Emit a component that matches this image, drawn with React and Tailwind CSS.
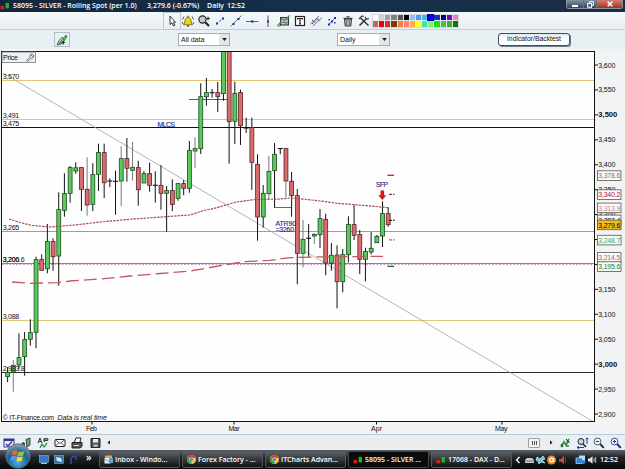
import React from 'react'

// [high, body top, body bottom, low, kind]
const candles = [
  [367, 372.3, 376.7, 382, 'g'], [360, 365, 372, 391.7, 'g'], [333.3, 357.3, 365, 369, 'g'],
  [332, 339.3, 356.7, 375.7, 'g'], [319.3, 332.3, 339.3, 345.7, 'g'], [256.7, 259.3, 332.3, 348.3, 'g'],
  [254.3, 259.3, 270.3, 270.3, 'r'], [224, 241.3, 268.7, 273.3, 'g'], [238.3, 241.3, 256.7, 270.7, 'r'],
  [192.3, 209.3, 256, 285.7, 'g'], [173.3, 193.3, 210.3, 216.7, 'g'], [166, 167.3, 193.3, 202.7, 'g'],
  [162.3, 167.5, 171, 173.7, 'g'], [167.3, 167.3, 189.3, 211, 'r'], [157.3, 189, 205, 215.7, 'r'],
  [163.3, 174.3, 204.3, 211, 'g'], [143.7, 152.3, 174.3, 191, 'g'], [143.7, 152.3, 182.7, 198, 'r'],
  [178.3, 181, 181, 187, 'd'], [170.7, 181.3, 181.3, 214.7, 'd'], [146.3, 158.3, 181, 206, 'g'],
  [138, 158.3, 168.3, 181.7, 'r'], [142, 167, 170.3, 180.7, 'g'], [160.7, 167.3, 189.7, 205.7, 'r'],
  [171, 173.3, 183, 183, 'g'], [162.7, 173.3, 185.3, 191.7, 'r'], [171.3, 185.3, 185.3, 202.7, 'd'],
  [165, 185, 193.3, 209.7, 'r'], [186, 190.3, 193.3, 231.7, 'g'], [179.3, 190.3, 204.3, 211, 'r'],
  [183.3, 183.3, 198.3, 200.7, 'g'], [180, 183.3, 188.3, 195.3, 'r'], [141, 150.3, 188.3, 192.7, 'g'],
  [137.3, 148.3, 151, 168.3, 'g'], [83.3, 96.3, 148.7, 154, 'g'], [78, 92.3, 96.7, 105.7, 'g'],
  [89, 92.7, 92.7, 97.7, 'd'], [82, 92.3, 96.7, 112, 'r'], [51, 50, 93.7, 100.7, 'g'],
  [51, 50, 121.7, 163.7, 'r'], [81.7, 93, 121.3, 144, 'g'], [89.7, 92.3, 125.7, 145, 'r'],
  [117.7, 128, 128, 133, 'd'], [117.7, 127.3, 162.3, 190, 'r'], [154.3, 164, 217, 240.7, 'r'],
  [185, 193, 217, 227.7, 'g'], [155.7, 171, 193.7, 199.3, 'g'], [143, 154, 170.7, 207.7, 'g'],
  [148.3, 148.5, 148.5, 154.3, 'd'], [148.3, 148.3, 181, 197.3, 'r'], [172, 181, 195.7, 216.7, 'r'],
  [189, 195.3, 253.3, 284.3, 'r'], [220, 239, 253.3, 267.3, 'g'], [224, 238.3, 238.3, 257, 'd'],
  [233, 234, 236, 244, 'g'], [209, 218.3, 234.7, 248, 'g'], [213.7, 219, 263, 275.3, 'r'],
  [243, 255, 263, 270.7, 'g'], [245.3, 254.7, 281.7, 308.3, 'r'], [249, 254.3, 281.7, 292.3, 'g'],
  [216.3, 224.3, 254.7, 262.3, 'g'], [205, 224.3, 235.3, 240, 'r'], [230, 234.3, 259.3, 274, 'r'],
  [247.7, 251.3, 259.3, 281.3, 'g'], [232, 248, 252, 254.3, 'g'], [235, 236, 242.7, 243, 'g'],
  [201.3, 213.3, 236, 247, 'g'], [207.3, 213.3, 224.7, 226.7, 'r'],
]

const greyWicks = [1, 14, 20, 22, 33, 46, 49, 52, 54]

const levels = [
  { y: 80.5, label: '3,570', color: '#e8c470' },
  { y: 119.5, label: '3,491', color: '#e8c470' },
  { y: 127.5, label: '3,475', color: '#111' },
  { y: 231.5, label: '3,265', color: '#869fd0' },
  { y: 263.5, label: '3,206.6', color: '#8c78b4' },
  { y: 320.5, label: '3,088', color: '#e2c870' },
  { y: 372.5, label: '2,983.8', color: '#2a2a2a' },
]

// 3,250 and 3,200 have no label, the price tags cover them
const ticks = ['3,600', '3,550', '3,500', '3,450', '3,400', '3,350', '3,300', '', '', '3,150', '3,100', '3,050', '3,000', '2,950', '2,900']

const tags = [
  { y: 175.5, text: '3,378.6', color: '#c0505c' },
  { y: 194.5, text: '3,340.2', color: '#b8202c' },
  { y: 207.8, text: '3,313.9', color: '#c8808a' },
  { y: 219.8, text: '3,287.4', color: '#111' },
  { y: 224.8, text: '3,279.6', color: '#000', fill: '#f5bd1c' },
  { y: 240, text: '3,248.7', color: '#4aa04a' },
  { y: 257.3, text: '3,214.5', color: '#b0606a' },
  { y: 266.5, text: '3,195.6', color: '#1c7a2c' },
]

const Candle = ({ data, index }) => {
  const [high, top, bottom, low, kind] = data
  const x = 7.6 + index * 5.68
  const wick = greyWicks.includes(index) ? '#777' : '#111'
  return (
    <g>
      <line x1={x} x2={x} y1={high} y2={low} stroke={wick} strokeWidth="1" />
      {kind === 'd' ? (
        <line x1={x - 2.5} x2={x + 2.5} y1={top} y2={top} stroke="#111" strokeWidth="1.1" />
      ) : (
        <rect x={x - 1.9} y={top + 0.3} width="3.9" height={Math.max(bottom - top - 0.3, 1.5)}
          fill={kind === 'g' ? '#58cc5a' : '#d96c6e'} stroke={kind === 'g' ? '#1c4a1e' : '#5c2022'} strokeWidth="0.8" />
      )}
    </g>
  )
}

const Chart = () => (
  <svg width="625" height="385" viewBox="0 49 625 385" className="block bg-[#f1f3f5]" fontFamily='"Liberation Sans", sans-serif' fontSize="7">
    <defs>
      <clipPath id="plot"><rect x="2" y="52" width="592" height="369" /></clipPath>
    </defs>
    <rect x="1.5" y="51.5" width="593" height="370" fill="#fefefe" stroke="#111" />
    <g clipPath="url(#plot)">
      {levels.map((l) => <line key={l.y} x1="2" x2="594" y1={l.y} y2={l.y} stroke={l.color} />)}
      <line x1="2" x2="594" y1="264.3" y2="264.3" stroke="#c088b8" strokeDasharray="2 1.5" />
      <line x1="3" y1="73" x2="593" y2="421.5" stroke="#a2a2a2" strokeWidth="0.8" />
      <line x1="189" x2="228" y1="99.5" y2="99.5" stroke="#3a7a48" />
      <path d="M274.5 207.5H291.5" stroke="#5a62a0" />
      {candles.map((c, i) => <Candle key={i} data={c} index={i} />)}
      <polyline points="9,219 20,222.5 32,225.5 50,227 75,225 100,222 133,219 157,217.3 190,215 203,210.7 217,207.7 235,202.3 253,199.7 280,199 290,198 300,198.7 323,201.3 337,203.3 367,205.7 388,207.7"
        fill="none" stroke="#a84a50" strokeWidth="1.2" strokeDasharray="2.4 1" />
      <polyline points="12,282 30,283.3 58,282.6 70,281 100,279 130,276 160,273.5 190,271 210,267.5 230,264 243,261.7 270,260.3 290,257.7 313,257 383,256.3"
        fill="none" stroke="#c0585c" strokeWidth="1.3" strokeDasharray="13 5" />
      <g strokeWidth="1.3">
        <line x1="387.5" x2="394" y1="175.3" y2="175.3" stroke="#c82030" />
        <line x1="389" x2="394.5" y1="194.3" y2="194.3" stroke="#a03038" strokeDasharray="3 1" />
        <line x1="389" x2="394.5" y1="220.3" y2="220.3" stroke="#222" strokeDasharray="3 1" />
        <line x1="389" x2="394.5" y1="239.8" y2="239.8" stroke="#50a058" strokeDasharray="3 1" />
        <line x1="387.5" x2="394" y1="266.3" y2="266.3" stroke="#106820" />
      </g>
      <path d="M380.5 190.5H384.1V195.2H386.3L382.3 200L378.3 195.2H380.5Z" fill="#dc1414" />
    </g>

    {levels.map((l) => <text key={l.label} x="2.7" y={l.y - 1.3} fill="#111" textLength={l.label.length > 5 ? 22 : 16.5}>{l.label}</text>)}
    <text x="2.7" y="262.2" fill="#111" textLength="16.5">3,200</text>
    <g fill="#2c2c8c" fontSize="6.8" stroke="#2c2c8c" strokeWidth="0.15">
      <text x="157.5" y="127" textLength="17.5">MLCS</text>
      <text x="376" y="186.7" textLength="12">SFP</text>
      <text x="275.5" y="225.5" textLength="20.5">ATR90</text>
      <text x="275.5" y="232.3" textLength="18.5">=3260</text>
    </g>
    <text x="2.7" y="419.5" fill="#111" textLength="51.5">© IT-Finance.com</text>
    <text x="57.5" y="419.5" fill="#111" fontStyle="italic" textLength="49.5">Data is real time</text>

    <rect x="2" y="52" width="33.5" height="10.5" fill="#edf1f4" stroke="#777" strokeWidth="0.8" />
    <text x="3" y="59.7" fill="#111" textLength="15">Price</text>
    <path d="M26.8 60.5L30 57.3C29.3 55.3 30.8 53.7 32.5 54L31.2 55.5L32.3 56.6L33.8 55.2C34.2 57 32.7 58.4 31.2 58.2L28 61.4Z" fill="#fff" stroke="#333" strokeWidth="0.7" />

    {ticks.map((t, i) => {
      const y = 65 + i * 24.93
      const major = t === '3,500' || t === '3,000'
      return (
        <g key={i}>
          <line x1="595" x2="598" y1={y} y2={y} stroke="#111" />
          {t && <text x="598.3" y={y + 2.5} fill="#111" fontSize={major ? 7.6 : 7} fontWeight={major ? 700 : 400} textLength={major ? 19 : 17}>{t}</text>}
        </g>
      )
    })}
    {tags.map((t) => (
      <g key={t.text}>
        <rect x="597.5" y={t.y - 4.7} width="23.5" height="9.6" fill={t.fill || '#fafbfb'} stroke="#555" strokeWidth="0.8" />
        <text x="598.3" y={t.y + 2.7} fill={t.color} textLength="22">{t.text}</text>
      </g>
    ))}
    {[[92, 'Feb', 86], [234, 'Mar', 228.5], [376.5, 'Apr', 371], [502, 'May', 495]].map(([x, label, tx]) => (
      <g key={label}>
        <line x1={x} x2={x} y1="422" y2="424.5" stroke="#111" />
        <text x={tx} y="431.3" fill="#111" textLength={label === 'May' ? 12.5 : 11}>{label}</text>
      </g>
    ))}
  </svg>
)

const Icon = ({ children, className = '' }) => (
  <svg viewBox="0 0 16 16" width="16" height="16" fill="none" stroke="#222" className={`shrink-0 ${className}`}>{children}</svg>
)

const drawTools = [
  <Icon key="cursor"><path d="M6 3L6 11.5L8 9.8L9.5 13L10.8 12.3L9.4 9.3H11.5Z" fill="#fff" strokeWidth="0.9" /></Icon>,
  <Icon key="bell">
    <path d="M3.5 11.8C5.5 10 4 4.8 8 4C12 4.8 10.5 10 12.5 11.8Z" fill="#f0d418" stroke="#6a5a10" strokeWidth="0.8" />
    <path d="M7 13H9M8 2.8V4" stroke="#6a5a10" strokeWidth="1.3" /><path d="M4 3.5L2.5 6.5M2 9L3 11M12 3.5L13.5 6.5M14 9L13 11" stroke="#444" strokeWidth="0.9" />
  </Icon>,
  <Icon key="search"><circle cx="6.5" cy="6.5" r="3.6" fill="#c4cad0" strokeWidth="1.1" /><path d="M9.3 9.3L13 13" strokeWidth="2.2" /><path d="M10 5.5H14M12 3.5V7.5" stroke="#333" /></Icon>,
  <Icon key="segment"><path d="M5 10.5L11 5.5" stroke="#888" strokeDasharray="1 1" /><path d="M4 9.5H6V11.5H4ZM7.5 7.5H8.5V8.5H7.5ZM10 4.5H12V6.5H10Z" fill="#2228a0" stroke="none" /></Icon>,
  <Icon key="line"><path d="M2.5 13.5L13.5 2.5" stroke="#555" strokeWidth="0.8" /><path d="M4.5 10H6.5V12H4.5ZM9.5 5H11.5V7H9.5Z" fill="#2228a0" stroke="none" /></Icon>,
  <Icon key="hline"><path d="M2 8.5H14.5" stroke="#555" strokeWidth="0.9" /><path d="M7 7.5H9.5V9.5H7Z" fill="#2228a0" stroke="none" /></Icon>,
  <Icon key="vline"><path d="M8 2.5V14" stroke="#444" strokeWidth="0.9" /><path d="M7 7.5H9V9.5H7Z" fill="#2228a0" stroke="none" /></Icon>,
  <Icon key="fib"><rect x="4.5" y="4.5" width="8" height="7.5" fill="#b8bcc0" strokeWidth="0.9" /><path d="M4 6.5H12M4 9.5H12M5 5L12 12" stroke="#555" strokeWidth="0.6" /><path d="M1.5 13L5 9M9 7L13.5 2.5" stroke="#20a030" strokeWidth="1.2" /><path d="M3 13.5L5 12" stroke="#d02020" /></Icon>,
  <Icon key="text"><rect x="3.5" y="3.5" width="9" height="9" fill="#fff" strokeWidth="1.2" /><path d="M5.5 6.5V5.5H10.5V6.5M8 5.5V11M7 11H9" strokeWidth="1.2" /></Icon>,
  <Icon key="channel"><path d="M2.5 11L11 3M5 13L14 4.5" stroke="#555" strokeWidth="0.8" /><path d="M4 7L7 9.5M9 5.5L12 8.5M4 11L11 5" stroke="#3038a8" strokeWidth="1" strokeDasharray="2 1" /></Icon>,
  <Icon key="points"><path d="M5 11.5L11 5" stroke="#555" strokeWidth="0.8" /><path d="M4 10.5H6V12.5H4ZM10 4H12V6H10ZM7 7.5H9V9.5H7ZM4.5 6H6V7.5H4.5ZM10 9H11.5V10.5H10Z" fill="#2228a0" stroke="none" /></Icon>,
  <Icon key="trash"><path d="M4.5 6H11.5L10.8 13H5.2Z" fill="#bbb" strokeWidth="0.9" /><path d="M3.5 5.3H12.5M6.5 3.8H9.5" /><path d="M6.7 7V12M9.3 7V12" stroke="#555" strokeWidth="0.8" /></Icon>,
  <Icon key="tools"><path d="M3.5 12.5L10 6M4 4.5L12.5 12.5" stroke="#333" strokeWidth="1.5" /><path d="M3 6L6 3L8 3.5M9 4L11 6.2L13 5.5" stroke="#444" strokeWidth="1.2" /></Icon>,
]

const palette = [
  'bg-white', 'bg-[#cfcfcf]', 'bg-[#a0a0a0]', 'bg-[#808080]', 'bg-[#555]', 'bg-black', 'bg-[#9bbcf0]', 'bg-[#5a96e6]', 'bg-[#40b8e8]', 'bg-[#0000e0]', 'bg-[#2828b8]', 'bg-[#000090]', 'bg-[#7208b0]', 'bg-[#f07cc0]',
  'bg-[#cc6068]', 'bg-[#f00000]', 'bg-[#dc2c2c]', 'bg-[#7c3c08]', 'bg-[#f08048]', 'bg-[#ff8070]', 'bg-[#ffb040]', 'bg-[#ffff20]', 'bg-[#40e0c0]', 'bg-[#80f080]', 'bg-[#08ec08]', 'bg-[#48c048]', 'bg-[#38ac38]', 'bg-[#087808]',
]

const Select = ({ label, className }) => (
  <div className={`flex h-[13px] items-center justify-between border border-[#a3adb4] bg-white pl-[2px] ${className}`}>
    <span className="text-[7px] leading-none">{label}</span>
    <span className="flex h-full w-[10px] items-center justify-center bg-[#e4e7ea]">
      <svg width="5" height="3" viewBox="0 0 5 3"><path d="M0 0H5L2.5 3Z" fill="#222" /></svg>
    </span>
  </div>
)

const CandleLogo = () => (
  <svg width="10" height="8" viewBox="0 0 10 8" className="shrink-0">
    <path d="M2.2 3V8M7.2 0V7" stroke="#333" strokeWidth="0.7" />
    <rect x="0.5" y="4" width="3.6" height="3.3" fill="#e01818" /><rect x="5.6" y="1" width="3.4" height="5.3" fill="#18b828" />
  </svg>
)

const ChromeLogo = () => (
  <svg width="9" height="9" viewBox="0 0 18 18" className="shrink-0">
    <circle cx="9" cy="9" r="9" fill="#f4c828" />
    <path d="M9 9L1.2 4.5A9 9 0 0 1 16.8 4.5Z" fill="#e03c2c" />
    <path d="M9 9L1.2 4.5A9 9 0 0 0 9 18Z" fill="#34a048" />
    <circle cx="9" cy="9" r="4.2" fill="#fff" /><circle cx="9" cy="9" r="3.2" fill="#3c78d8" />
  </svg>
)

const MailLogo = () => (
  <svg width="9" height="9" viewBox="0 0 9 9" className="shrink-0">
    <rect x="1" y="0.5" width="7" height="4" fill="#f0a040" /><rect x="0.5" y="3" width="6" height="5.5" fill="#e8eef4" /><path d="M5 3H9V8H5Z" fill="#58a8e0" /><path d="M1 4L4 6.5L7 4" stroke="#5080a0" fill="none" strokeWidth="0.7" />
  </svg>
)

const TaskButton = ({ icon, label, active }) => (
  <div className={`flex h-[17px] w-[81px] shrink-0 items-center gap-[2px] rounded-[2px] border pl-[4px] text-white ${active ? 'border-[#444] bg-[#0b0b0c]' : 'border-[#53565a] bg-linear-to-b from-[#5d6165] via-[#34373a] to-[#141516]'}`}>
    {icon}
    <span className="text-[7px] leading-none whitespace-nowrap">{label}</span>
  </div>
)

const TitleBar = () => (
  <div className="flex h-3 items-start bg-linear-to-r from-[#14263c] via-[#14304c] to-[#1a2d44] text-white">
    <div className="mt-[2px] flex w-[13px]"><CandleLogo /></div>
    <div className="flex h-[11px] items-center font-['Open_Sans',sans-serif] text-[7px] leading-none font-semibold whitespace-nowrap">
      <span className="w-[134px]">58095 - SILVER - Rolling Spot (per 1.0)</span>
      <span className="w-[60px]">3,279.6 (-0.67%)</span>
      <span className="w-[20px]">Daily</span>
      <span>12:52</span>
    </div>
    <div className="mr-[2px] ml-auto flex h-[9px] overflow-hidden rounded-b-[3px] border border-t-0 border-[#8994a0]">
      <div className="flex w-[16px] items-center justify-center bg-linear-to-b from-[#8492a2] to-[#34465a]"><div className="mt-[3px] h-[2px] w-[6px] bg-white" /></div>
      <div className="flex w-[14px] items-center justify-center border-x border-[#66717e] bg-linear-to-b from-[#8492a2] to-[#34465a]">
        <svg width="7" height="7" viewBox="0 0 7 7" fill="none" stroke="#fff"><path d="M2.5 2V0.7H6.3V4.5H5" /><rect x="0.7" y="2.5" width="3.8" height="3.8" /></svg>
      </div>
      <div className="flex w-[25px] items-center justify-center bg-linear-to-b from-[#d08072] to-[#a82c18]">
        <svg width="6" height="6" viewBox="0 0 6 6" stroke="#fff" strokeWidth="1.6"><path d="M0.7 0.7L5.3 5.3M5.3 0.7L0.7 5.3" /></svg>
      </div>
    </div>
  </div>
)

const ToolBars = () => (
  <>
    <div className="flex h-[18px] items-center border-b border-[#c3ced6] bg-linear-to-b from-[#f3f8fa] to-[#e8eff4] pl-[164px]">
      {drawTools.map((tool, i) => (
        <div key={i} className={`flex h-4 w-4 shrink-0 items-center justify-center ${i === 0 ? 'outline outline-[#c0c8ce]' : ''}`}>{tool}</div>
      ))}
      <div className="grid h-[14px] w-[87px] shrink-0 grid-cols-14 gap-px border border-[#d4d8dc] bg-[#e4e8ec]">
        {palette.map((c, i) => <div key={i} className={`${c} ${i === 9 ? 'outline outline-[#0000b0]' : ''}`} />)}
      </div>
    </div>
    <div className="flex h-[19px] items-center bg-[#e9f0f4]">
      <div className="ml-[54px] flex h-[15px] w-[16px] items-center justify-center border border-[#b4bec5]">
        <Icon><path d="M3 13L5.5 8L8.5 5L10.5 8.5L7 12Z" fill="#dfe8e0" stroke="#4a5a50" /><path d="M5 12L12.5 3M10 9L13 4" stroke="#2a9a3a" strokeWidth="1.2" /><path d="M7.5 10.5H11M9.2 8.8V12.5" strokeWidth="1.2" /></Icon>
      </div>
      <Select label="All data" className="ml-[108px] w-[52px]" />
      <Select label="Daily" className="ml-[107px] w-[53px]" />
      <div className="ml-[108px] flex h-[13px] w-[72px] items-center justify-center rounded-[3px] border border-[#3c4f60] bg-linear-to-b from-[#dbe9f2] to-white to-40% text-[6.8px] leading-none shadow-[1px_1px_0_#70808c]">Indicator/Backtest</div>
    </div>
  </>
)

const BottomBar = () => (
  <div className="flex h-4 items-center border-t border-[#b8cbd6] bg-[#e8f0f5] pl-px">
    <div className="flex shrink-0 gap-px">
      <Icon><rect x="3" y="4" width="10" height="8" fill="#e8eaff" stroke="#343490" /><path d="M3 5H13" stroke="#343490" strokeWidth="2" /><path d="M5 9L7 11L11 6.5" stroke="#343490" strokeWidth="1.3" /></Icon>
      <Icon><path d="M5 7V12M9.5 4V11" stroke="#333" /><path d="M4 8H6.5V12.5H4Z" fill="#c04848" strokeWidth="0.7" /><path d="M8 4.5L12 3V10L9 12Z" fill="#60b070" strokeWidth="0.8" /></Icon>
      <Icon><path d="M3 8L5 3L7 8M4 6.5H6M8 5H13M9 7L12 4" strokeWidth="0.9" /><path d="M5 13L7 9L9 12L12 8" stroke="#26943a" strokeWidth="1.3" /><path d="M9 3.5H13V5.5H9Z" fill="#42a852" strokeWidth="0.6" /></Icon>
      <Icon><rect x="3" y="4.5" width="10" height="7" rx="1" fill="#fff" /><path d="M3.5 5L8 8.5L12.5 5M3.5 11L6.5 8M12.5 11L9.5 8" strokeWidth="0.8" /></Icon>
      <Icon><path d="M5.5 7L7 3H12L11 7" fill="#fff" /><path d="M3 7.5H13V11.5L11 13H3Z" fill="#555" /><path d="M4.5 10.5H10" stroke="#ddd" /></Icon>
      <Icon className="ml-px"><path d="M4 3.5H13V12.5H4Z" fill="#555" /><path d="M6 4H11V7.5H6Z" fill="#e8eaec" stroke="none" /><path d="M6.5 9.5H10.5V12H6.5Z" fill="#bbb" stroke="none" /></Icon>
    </div>
    <div className="ml-[4px] flex h-[9px] w-[449px] items-center bg-[#e9ebed]">
      <svg width="4" height="5" viewBox="0 0 4 5"><path d="M3 0.5V4.5L0.5 2.5Z" fill="#111" /></svg>
      <div className="mr-[2px] ml-auto flex h-[10px] w-[12px] items-center justify-center gap-px rounded-[1px] border border-[#9a9fa4] bg-[#f2f3f4]">
        <div className="h-1 w-px bg-[#555]" /><div className="h-1 w-px bg-[#555]" /><div className="h-1 w-px bg-[#555]" />
      </div>
      <svg width="4" height="5" viewBox="0 0 4 5" className="mr-[3px] ml-[7px]"><path d="M1 0.5V4.5L3.5 2.5Z" fill="#111" /></svg>
    </div>
    <div className="mr-px ml-auto flex shrink-0 gap-px">
      <Icon><path d="M4 12L7 7L9 10L12 4" stroke="#2a9a42" strokeWidth="1.8" /><path d="M4 9L6 12M9 4L12.5 8M9 11H12" strokeWidth="1" /></Icon>
      <Icon><circle cx="7" cy="6.5" r="3" fill="#c8d0d8" /><path d="M9 9L12 12" strokeWidth="1.7" /><path d="M3 12.5H10M3 12.5L5 11M3 12.5L5 14M13 3V9M11.8 4.3L13 2.8L14.2 4.3" stroke="#2838b8" /></Icon>
      <Icon><circle cx="6.5" cy="6.5" r="3.4" fill="#fff" stroke="#555" /><path d="M9.2 9.2L12.8 12.8" strokeWidth="1.9" /><path d="M4.8 6.5H8.2" stroke="#2838b8" strokeWidth="1.2" /></Icon>
      <Icon><circle cx="6.5" cy="6.5" r="3.4" fill="#fff" stroke="#444a80" /><path d="M9.2 9.2L12.8 12.8" stroke="#181c50" strokeWidth="1.9" /><path d="M4.8 6.5H8.2M6.5 4.8V8.2" stroke="#2838b8" strokeWidth="1.2" /></Icon>
    </div>
  </div>
)

const StartOrb = () => (
  <svg width="26" height="26" viewBox="0 0 26 26" className="absolute -top-[7px] left-[5px]">
    <defs>
      <radialGradient id="orb" cx="50%" cy="75%" r="75%">
        <stop offset="0" stopColor="#48b4dc" /><stop offset="0.55" stopColor="#24608c" /><stop offset="1" stopColor="#8ea8b8" />
      </radialGradient>
    </defs>
    <circle cx="13" cy="13" r="12.3" fill="url(#orb)" stroke="#4c6474" strokeWidth="0.8" />
    <path d="M7.5 8.3C9.5 7 11 7.2 12.6 8L11.6 12.3C9.8 11.5 8.5 11.5 6.5 12.6Z" fill="#ee6a30" />
    <path d="M13.5 8.4C15.3 9.2 17.2 9 19.3 8L18.2 12.5C16.3 13.5 14.5 13.4 12.5 12.7Z" fill="#8cc840" />
    <path d="M6.2 13.5C8.2 12.4 9.6 12.5 11.4 13.2L10.3 17.6C8.5 16.7 7 16.8 5.1 18Z" fill="#4a9ce8" />
    <path d="M12.3 13.6C14.2 14.4 16 14.3 18 13.4L16.9 17.8C15 18.8 13.2 18.6 11.3 17.9Z" fill="#fad038" />
  </svg>
)

const TaskBar = () => (
  <div className="relative flex h-[19px] items-center bg-linear-to-b from-[#5c6064] via-[#202326] via-40% to-[#060707] font-['Open_Sans',sans-serif] font-semibold text-white">
    <StartOrb />
    <div className="ml-[39px] flex w-[60px] shrink-0 items-center gap-[5px]">
      <svg width="10" height="9" viewBox="0 0 10 9"><rect x="0.5" y="0.5" width="9" height="7" fill="#3478c8" stroke="#90b8e0" strokeWidth="0.6" /><path d="M2 8.5H8" stroke="#bbb" /></svg>
      <svg width="10" height="9" viewBox="0 0 10 9"><rect x="0.5" y="0.5" width="9" height="8" fill="#3470b0" stroke="#88b0d8" strokeWidth="0.6" /><path d="M2 2L7 3L8 7L3 6Z" fill="#d8e8f4" /></svg>
      <svg width="8" height="10" viewBox="0 0 8 10" fill="none" stroke="#2850a0" strokeWidth="1.6"><path d="M2 9V5C2 2 5 0 7 2V5" /></svg>
      <span className="-mt-[5px] ml-[4px] text-[10px] leading-none">»</span>
    </div>
    <div className="flex shrink-0 gap-[2px]">
      <TaskButton icon={<MailLogo />} label="Inbox - Windo..." />
      <TaskButton icon={<ChromeLogo />} label="Forex Factory - ..." />
      <TaskButton icon={<ChromeLogo />} label="ITCharts Advan..." />
      <TaskButton icon={<CandleLogo />} label="58095 - SILVER ..." active />
      <TaskButton icon={<CandleLogo />} label="17068 - DAX - D..." />
    </div>
    <div className="mr-[7px] ml-auto flex shrink-0 items-center">
      <svg width="82" height="12" viewBox="0 0 82 12" fill="none">
        <path d="M4.5 3L1.5 6L4.5 9" stroke="#fff" strokeWidth="1.3" />
        <path d="M10 6L12 4H17L19 6V9H10Z" fill="#c8ccd0" /><path d="M10 7H19" stroke="#777" />
        <path d="M22 3L25 5L28 2L30 5L27 6L30 9L26 8L24 10L23 7L21 6Z" fill="#5cc4e4" stroke="#b8e8f4" strokeWidth="0.8" />
        <circle cx="36.5" cy="6" r="4.5" fill="#f08820" /><circle cx="36.5" cy="6" r="1.8" stroke="#fff" strokeWidth="1.3" /><path d="M38.8 4V8" stroke="#fff" />
        <path d="M44 5H46L49 2V10L46 7.5H44Z" fill="#c45040" /><path d="M50.5 3V9" stroke="#8c3428" />
        <rect x="64" y="1.5" width="6" height="6" fill="#b8dcf0" /><rect x="61" y="4" width="6.5" height="5.5" fill="#2c84cc" stroke="#c0e0f0" strokeWidth="0.7" /><circle cx="68.5" cy="8" r="2" fill="#3484d8" />
        <path d="M73 4.5H75L77.5 2V10L75 7.5H73Z" fill="#e4e8ea" /><path d="M79 4V8M80.7 3V9" stroke="#e4e8ea" strokeWidth="0.8" />
      </svg>
      <span className="ml-[3px] text-[7px] leading-none">12:52</span>
    </div>
  </div>
)

const App = () => {
  return (
    <div className="flex h-[469px] w-[625px] flex-col overflow-hidden bg-[#eef2f5] font-['Liberation_Sans',sans-serif] text-[#111]">
      <TitleBar />
      <ToolBars />
      <Chart />
      <BottomBar />
      <TaskBar />
    </div>
  )
}

export default App
